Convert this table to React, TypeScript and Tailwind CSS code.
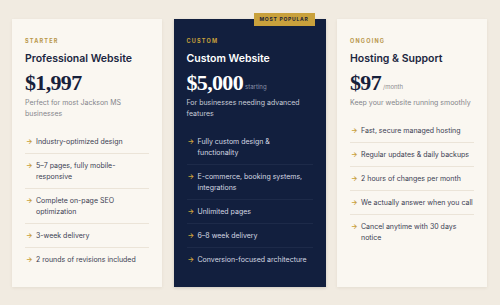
import React from "react";

interface Plan {
  label: string;
  title: string;
  price: string;
  suffix?: string;
  desc: string;
  features: string[];
  featured?: boolean;
}

const plans: Plan[] = [
  {
    label: "Starter",
    title: "Professional Website",
    price: "$1,997",
    desc: "Perfect for most Jackson MS businesses",
    features: [
      "Industry-optimized design",
      "5–7 pages, fully mobile-responsive",
      "Complete on-page SEO optimization",
      "3-week delivery",
      "2 rounds of revisions included",
    ],
  },
  {
    label: "Custom",
    title: "Custom Website",
    price: "$5,000",
    suffix: "starting",
    desc: "For businesses needing advanced features",
    featured: true,
    features: [
      "Fully custom design & functionality",
      "E-commerce, booking systems, integrations",
      "Unlimited pages",
      "6–8 week delivery",
      "Conversion-focused architecture",
    ],
  },
  {
    label: "Ongoing",
    title: "Hosting & Support",
    price: "$97",
    suffix: "/month",
    desc: "Keep your website running smoothly",
    features: [
      "Fast, secure managed hosting",
      "Regular updates & daily backups",
      "2 hours of changes per month",
      "We actually answer when you call",
      "Cancel anytime with 30 days notice",
    ],
  },
];

function PlanCard({ plan }: { plan: Plan }) {
  const dark = plan.featured;
  return (
    <div
      className={`relative flex flex-col px-[13px] pt-[18px] pb-[16px] ${
        dark
          ? "bg-[#121f3e] shadow-[0_1px_3px_rgba(0,0,0,0.15)]"
          : "bg-[#faf7f1] shadow-[0_1px_3px_rgba(80,60,20,0.08)]"
      }`}
    >
      {dark && (
        <div className="absolute -top-[6px] right-[11px] h-[13px] w-[61px] bg-[#c9a13c] flex items-center justify-center text-[5px] font-bold tracking-[0.15em] text-[#1a2238]">
          MOST POPULAR
        </div>
      )}
      <div
        className={`text-[5.5px] leading-[8px] font-bold uppercase tracking-[0.22em] ${
          dark ? "text-[#c9a13c]" : "text-[#b8964a]"
        }`}
      >
        {plan.label}
      </div>
      <h3
        className={`mt-[7px] text-[10.5px] leading-[14px] font-semibold ${
          dark ? "text-white" : "text-[#1b2640]"
        }`}
      >
        {plan.title}
      </h3>
      <div className="mt-[5px] flex items-end">
        <span
          className={`font-['Liberation_Serif',serif] text-[22px] leading-[24px] font-bold tracking-[-0.03em] ${
            dark ? "text-white" : "text-[#17213b]"
          }`}
        >
          {plan.price}
        </span>
        {plan.suffix && (
          <span
            className={`ml-[2px] mb-[4px] text-[6px] leading-[8px] ${
              dark ? "text-[#8a93a8]" : "text-[#8b8b90]"
            }`}
          >
            {plan.suffix}
          </span>
        )}
      </div>
      <p
        className={`mt-[2px] text-[7px] leading-[11px] ${
          dark ? "text-[#c8cdd8]" : "text-[#85868c]"
        }`}
      >
        {plan.desc}
      </p>
      <ul className="mt-[11px]">
        {plan.features.map((f, i) => (
          <li
            key={f}
            className={`flex py-[6px] text-[7px] leading-[11px] ${
              i > 0 ? (dark ? "border-t border-[#1d2a49]" : "border-t border-[#ebe4d8]") : ""
            }`}
          >
            <span className="w-[11px] shrink-0 text-[#c9a13c] pl-[1px] font-bold">→</span>
            <span className={dark ? "text-[#d5d9e2]" : "text-[#3b4052]"}>{f}</span>
          </li>
        ))}
      </ul>
    </div>
  );
}

export default function App() {
  return (
    <div className="w-[500px] h-[305px] bg-[#f1ebe1] font-['Inter',sans-serif] pt-[19px] pl-[12px]">
      <div className="grid grid-cols-[150px_152px_150px] gap-[11.5px] h-[268px]">
        {plans.map((p) => (
          <PlanCard key={p.title} plan={p} />
        ))}
      </div>
    </div>
  );
}
